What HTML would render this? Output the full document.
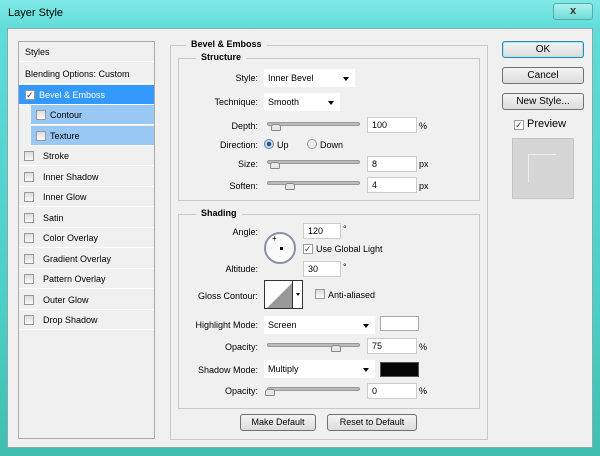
<!DOCTYPE html><html><head><style>
*{margin:0;padding:0;box-sizing:border-box}
body{width:600px;height:456px;overflow:hidden;background:#3cc9be;font-family:"Liberation Sans",sans-serif;font-size:9px;color:#000;position:relative}
.a{position:absolute}
.frame{left:0;top:0;width:600px;height:456px;background:linear-gradient(180deg,#7fe9e6 0,#5fdcd8 30px,#4ccfc6 300px,#3fbfb0 456px)}
.client{left:7px;top:28px;width:586px;height:420px;background:#f0f0f0;border:1px solid #8aa}
.row{position:absolute;left:19px;width:135px;height:20px;border-bottom:1px solid #fff;padding-left:24px;line-height:20px;font-size:9px}
.cb{position:absolute;width:10px;height:10px;border:1px solid #999;background:linear-gradient(#ddd,#fafafa)}
.lbl{position:absolute;text-align:right;font-size:9px}
.inp{position:absolute;background:#fff;border:1px solid #ccc;height:16px;line-height:15px;padding-left:4px;font-size:9px}
.sel{position:absolute;background:#fff;height:18px;line-height:18px;padding-left:4px;font-size:9px}
.sel:after{content:"";position:absolute;right:6px;top:8px;border-left:3px solid transparent;border-right:3px solid transparent;border-top:4px solid #000}
.sl{position:absolute;height:4px;background:#bbb;border:1px solid #999;border-radius:2px}
.th{position:absolute;width:10px;height:7px;background:#e8e8e8;border:1px solid #888;border-radius:3px 3px 1px 1px}
.btn{position:absolute;border:1px solid #707070;border-radius:3px;background:linear-gradient(#f4f4f4,#dcdcdc);text-align:center;font-size:10px}
.grp{position:absolute;border:1px solid #c8c8c8}
.gt{position:absolute;background:#f0f0f0;font-weight:bold;padding:0 5px;font-size:9px}
</style></head><body>
<div class="a frame"></div>
<div class="a" style="left:8px;top:7px;font-size:11px">Layer Style</div>
<div class="a" style="left:553px;top:3px;width:40px;height:17px;border:1px solid #5aa;border-radius:3px;background:linear-gradient(#aef2ee,#70dcd6);text-align:center;font-weight:bold;font-size:11px;color:#333;line-height:15px">x</div>
<div class="a client"></div>

<div class="a" style="left:18px;top:41px;width:137px;height:398px;border:1px solid #aaa;background:#f0f0f0"></div>
<div class="row" style="top:42px;padding-left:6px">Styles</div>
<div class="row" style="top:64px;padding-left:6px">Blending Options: Custom</div>
<div class="row" style="top:85px;background:#3399ff;color:#fff;padding-left:20px;width:135px">Bevel &amp; Emboss</div>
<div class="row" style="top:105px;left:31px;width:123px;background:#99c8f4;padding-left:19px">Contour</div>
<div class="row" style="top:126px;left:31px;width:123px;background:#99c8f4;padding-left:19px">Texture</div>
<div class="cb" style="left:25px;top:90px;background:#fff;font-size:9px;line-height:8px;color:#335">✓</div>
<div class="cb" style="left:36px;top:110px"></div>
<div class="cb" style="left:36px;top:131px"></div>
<div class="row" style="top:146px">Stroke</div>
<div class="row" style="top:167px">Inner Shadow</div>
<div class="row" style="top:187px">Inner Glow</div>
<div class="row" style="top:208px">Satin</div>
<div class="row" style="top:228px">Color Overlay</div>
<div class="row" style="top:249px">Gradient Overlay</div>
<div class="row" style="top:269px">Pattern Overlay</div>
<div class="row" style="top:290px">Outer Glow</div>
<div class="row" style="top:310px">Drop Shadow</div>
<div class="cb" style="left:24px;top:151px"></div><div class="cb" style="left:24px;top:172px"></div><div class="cb" style="left:24px;top:192px"></div><div class="cb" style="left:24px;top:213px"></div><div class="cb" style="left:24px;top:233px"></div><div class="cb" style="left:24px;top:254px"></div><div class="cb" style="left:24px;top:274px"></div><div class="cb" style="left:24px;top:295px"></div><div class="cb" style="left:24px;top:315px"></div>

<div class="grp" style="left:170px;top:45px;width:318px;height:395px"></div>
<div class="gt" style="left:186px;top:39px">Bevel &amp; Emboss</div>
<div class="grp" style="left:178px;top:58px;width:302px;height:143px"></div>
<div class="gt" style="left:196px;top:52px">Structure</div>

<div class="lbl" style="left:190px;width:68px;top:73px">Style:</div>
<div class="sel" style="left:264px;top:69px;width:91px">Inner Bevel</div>
<div class="lbl" style="left:190px;width:68px;top:97px">Technique:</div>
<div class="sel" style="left:264px;top:93px;width:76px">Smooth</div>
<div class="lbl" style="left:190px;width:68px;top:121px">Depth:</div>
<div class="sl" style="left:267px;top:122px;width:93px"></div><div class="th" style="left:271px;top:124px"></div>
<div class="inp" style="left:367px;top:117px;width:50px">100</div><div class="a" style="left:419px;top:121px">%</div>
<div class="lbl" style="left:190px;width:68px;top:140px">Direction:</div>
<div class="a" style="left:264px;top:139px;width:10px;height:10px;border-radius:50%;border:1px solid #779;background:radial-gradient(#1a5a9a 35%,#cde 45%)"></div><div class="a" style="left:277px;top:140px">Up</div>
<div class="a" style="left:307px;top:139px;width:10px;height:10px;border-radius:50%;border:1px solid #999;background:#eee"></div><div class="a" style="left:320px;top:140px">Down</div>
<div class="lbl" style="left:190px;width:68px;top:159px">Size:</div>
<div class="sl" style="left:267px;top:160px;width:93px"></div><div class="th" style="left:270px;top:162px"></div>
<div class="inp" style="left:367px;top:156px;width:50px">8</div><div class="a" style="left:419px;top:159px">px</div>
<div class="lbl" style="left:190px;width:68px;top:181px">Soften:</div>
<div class="sl" style="left:267px;top:181px;width:93px"></div><div class="th" style="left:285px;top:183px"></div>
<div class="inp" style="left:367px;top:177px;width:50px">4</div><div class="a" style="left:419px;top:181px">px</div>

<div class="grp" style="left:178px;top:214px;width:302px;height:195px"></div>
<div class="gt" style="left:196px;top:208px">Shading</div>
<div class="lbl" style="left:190px;width:68px;top:227px">Angle:</div>
<div class="inp" style="left:303px;top:223px;width:38px">120</div><div class="a" style="left:343px;top:224px">°</div>
<div class="a" style="left:264px;top:232px;width:32px;height:32px;border-radius:50%;border:2px solid #8a94a4;background:#fafafa"></div>
<div class="a" style="left:280px;top:247px;width:3px;height:3px;background:#000"></div>
<div class="a" style="left:272px;top:234px;font-size:8px">+</div>
<div class="cb" style="left:303px;top:244px;background:#fff;font-size:9px;line-height:8px;color:#335">✓</div><div class="a" style="left:316px;top:244px">Use Global Light</div>
<div class="lbl" style="left:190px;width:68px;top:264px">Altitude:</div>
<div class="inp" style="left:303px;top:261px;width:38px">30</div><div class="a" style="left:343px;top:262px">°</div>
<div class="lbl" style="left:190px;width:68px;top:291px">Gloss Contour:</div>
<div class="a" style="left:264px;top:280px;width:29px;height:29px;border:1px solid #333;background:#fff;overflow:hidden"><svg width="29" height="29"><polygon points="0,29 29,0 29,29" fill="#999"/></svg></div>
<div class="a" style="left:293px;top:280px;width:10px;height:29px;border:1px solid #333;border-left:none;background:#fff"></div>
<div class="a" style="left:296px;top:293px;border-left:2px solid transparent;border-right:2px solid transparent;border-top:3px solid #000"></div>
<div class="cb" style="left:315px;top:289px"></div><div class="a" style="left:328px;top:290px">Anti-aliased</div>
<div class="lbl" style="left:170px;width:88px;top:320px">Highlight Mode:</div>
<div class="sel" style="left:264px;top:316px;width:111px">Screen</div>
<div class="a" style="left:380px;top:316px;width:39px;height:15px;border:1px solid #aaa;background:#fff"></div>
<div class="lbl" style="left:190px;width:68px;top:342px">Opacity:</div>
<div class="sl" style="left:267px;top:343px;width:93px"></div><div class="th" style="left:331px;top:345px"></div>
<div class="inp" style="left:367px;top:338px;width:50px">75</div><div class="a" style="left:419px;top:342px">%</div>
<div class="lbl" style="left:170px;width:88px;top:365px">Shadow Mode:</div>
<div class="sel" style="left:264px;top:360px;width:111px">Multiply</div>
<div class="a" style="left:380px;top:362px;width:39px;height:15px;border:1px solid #555;background:#050505"></div>
<div class="lbl" style="left:190px;width:68px;top:386px">Opacity:</div>
<div class="sl" style="left:267px;top:387px;width:93px"></div><div class="th" style="left:265px;top:389px"></div>
<div class="inp" style="left:367px;top:383px;width:50px">0</div><div class="a" style="left:419px;top:386px">%</div>

<div class="btn" style="left:240px;top:414px;width:76px;height:17px;line-height:15px;font-size:9px">Make Default</div>
<div class="btn" style="left:327px;top:414px;width:90px;height:17px;line-height:15px;font-size:9px">Reset to Default</div>

<div class="btn" style="left:502px;top:41px;width:82px;height:17px;line-height:15px;border-color:#3c7fb1;box-shadow:inset 0 0 0 1px #9ee">OK</div>
<div class="btn" style="left:502px;top:67px;width:82px;height:17px;line-height:15px">Cancel</div>
<div class="btn" style="left:502px;top:93px;width:82px;height:17px;line-height:15px">New Style...</div>
<div class="cb" style="left:514px;top:120px;background:#fff;font-size:9px;line-height:8px;color:#335">✓</div><div class="a" style="left:527px;top:118px;font-size:11px">Preview</div>
<div class="a" style="left:512px;top:138px;width:62px;height:61px;background:#d6d6d6;border:1px solid #c4c4c4"></div>
<div class="a" style="left:528px;top:154px;width:28px;height:28px;border-left:1px solid #eee;border-top:1px solid #eee"></div>
</body></html>
